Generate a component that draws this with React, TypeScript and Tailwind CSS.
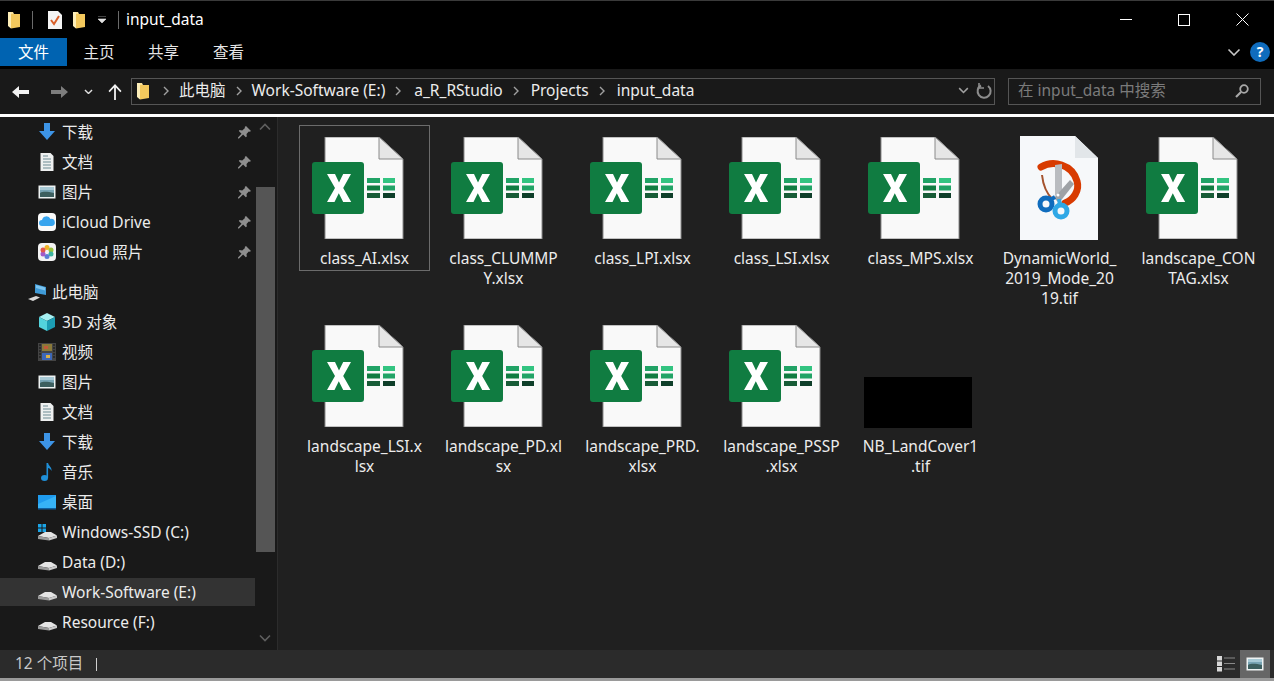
import React from 'react';

const FolderIcon = () => (
  <svg width="13" height="18" viewBox="0 0 13 18" className="shrink-0">
    <path d="M0 1h5l1 2h6v12H0z" fill="#fbe39a" />
    <path d="M3 3h9v13l-9 1.500z" fill="#f4c95d" />
    <path d="M0 1h3v16.500L0 15z" fill="#fdeeb8" />
  </svg>
);

const Sep = () => <div className="mx-[6px] h-[18px] w-px bg-[#6a6a6a]" />;

const Chevron = ({ color = '#a0a0a0' }: { color?: string }) => (
  <svg width="6" height="10" viewBox="0 0 6 10" className="shrink-0">
    <path d="M1 1l4 4-4 4" fill="none" stroke={color} strokeWidth="1.400" />
  </svg>
);

const Down = ({ w = 14, color = '#cfcfcf', sw = 2 }: { w?: number; color?: string; sw?: number }) => (
  <svg width={w} height={w * 0.6} viewBox="0 0 14 8.400" className="shrink-0">
    <path d="M1.500 1.500l5.500 5.500 5.500-5.500" fill="none" stroke={color} strokeWidth={sw} />
  </svg>
);

const ArrowDownBlue = () => (
  <svg width="18" height="18" viewBox="0 0 18 18">
    <path d="M6 0h6v8h5l-8 9-8-9h5z" fill="#3d94e6" />
  </svg>
);

const DocIcon = () => (
  <svg width="18" height="18" viewBox="0 0 18 18">
    <path d="M2.500 0h10l3 3v15h-13z" fill="#eef0f0" />
    <path d="M5 3h5M5 6h8M5 9h8M5 12h8M5 15h8" stroke="#6d8b93" strokeWidth="1" />
  </svg>
);

const PicIcon = () => (
  <svg width="18" height="18" viewBox="0 0 18 18">
    <rect x="0.500" y="2.500" width="17" height="13" fill="#eef2f2" />
    <rect x="2" y="4" width="14" height="10" fill="#79a5b5" />
    <path d="M2 10c4-2 8-1 14 0v4H2z" fill="#3d5f5f" />
    <path d="M2 4h14v3H2z" fill="#a7c9d5" />
  </svg>
);

const CloudIcon = () => (
  <svg width="18" height="18" viewBox="0 0 18 18">
    <rect width="18" height="18" rx="4" fill="#fafafa" />
    <path d="M4 13a3 3 0 0 1 0-6 4.500 4.500 0 0 1 8.500-1A3.500 3.500 0 0 1 14 13z" fill="#37a4ee" />
  </svg>
);

const PhotosIcon = () => (
  <svg width="18" height="18" viewBox="0 0 18 18">
    <rect width="18" height="18" rx="4" fill="#f4f4f4" />
    <circle cx="9" cy="4.500" r="2.500" fill="#f0b429" />
    <circle cx="13" cy="7" r="2.500" fill="#9ac33c" />
    <circle cx="13" cy="11" r="2.500" fill="#3db4a0" />
    <circle cx="9" cy="13.500" r="2.500" fill="#5b7fd6" />
    <circle cx="5" cy="11" r="2.500" fill="#a35bc9" />
    <circle cx="5" cy="7" r="2.500" fill="#e2574c" />
  </svg>
);

const PcIcon = () => (
  <svg width="20" height="18" viewBox="0 0 20 18">
    <path d="M7 1l11 3v8L7 10z" fill="#3f9ad6" />
    <path d="M8 2l9 2.500v3L8 5z" fill="#7cc4ee" />
    <path d="M0 16l8-3 4 1.500L5 18z" fill="#d8d8d8" />
  </svg>
);

const CubeIcon = () => (
  <svg width="18" height="18" viewBox="0 0 18 18">
    <path d="M9 0l8 4-8 4-8-4z" fill="#a6f0f2" />
    <path d="M1 4l8 4v10l-8-4z" fill="#53d3dc" />
    <path d="M17 4L9 8v10l8-4z" fill="#1c9db3" />
  </svg>
);

const VideoIcon = () => (
  <svg width="18" height="18" viewBox="0 0 18 18">
    <rect width="18" height="18" fill="#444" />
    <rect x="4" y="1" width="10" height="7" fill="#8a7a3a" />
    <rect x="4" y="10" width="10" height="7" fill="#3d67b8" />
    <path d="M6 3h4v3H6z" fill="#c25a3a" />
    <path d="M8 12h4v3H8z" fill="#d9b24a" />
    <path d="M1 2h2M1 5h2M1 8h2M1 11h2M1 14h2M15 2h2M15 5h2M15 8h2M15 11h2M15 14h2" stroke="#111" strokeWidth="1.200" />
  </svg>
);

const MusicIcon = () => (
  <svg width="18" height="18" viewBox="0 0 18 18">
    <ellipse cx="6.500" cy="15" rx="3.500" ry="3" fill="#1f8fd8" />
    <path d="M8.500 0h1.600c.4 3 4 4 3.400 8-.8-2-2.500-2.800-3.400-3V15H8.500z" fill="#1f8fd8" />
  </svg>
);

const DesktopIcon = () => (
  <svg width="18" height="18" viewBox="0 0 18 18">
    <rect y="2" width="18" height="13" fill="#1f9bee" />
    <path d="M0 11L18 3v12H0z" fill="#37b3f6" />
    <path d="M0 15h18v1.500H0z" fill="#0f5f9e" />
  </svg>
);

const DriveIcon = ({ win }: { win?: boolean }) => (
  <svg width="19" height="18" viewBox="0 0 19 18">
    {win && <path d="M0 1h3.500v3.500H0zM4.500 1H8v3.500H4.500zM0 5.500h3.500V9H0zM4.500 5.500H8V9H4.500z" fill="#1aa5e8" />}
    <path d="M0 13l7-4h6l6 3.500-8 2.500z" fill="#e4e4e4" />
    <path d="M0 13l11 2v2.500L0 16z" fill="#9a9a9a" />
    <path d="M11 15l8-2.500v2.500l-8 2.500z" fill="#c9c9c9" />
  </svg>
);

const PinIcon = () => (
  <svg width="13" height="13" viewBox="0 0 13 13">
    <path d="M8 0l5 5-1.200.8-1-.4L8.500 8l.3 2.500-1 .8-2.700-2.800L1 12.500 0 12.500 0 11.500l3.500-3.700L.8 5 1.600 4 4.200 4.500 7 2l-.3-1z" fill="#8f8f8f" />
  </svg>
);

type NavRow = { id: string; label: string; icon: React.ReactNode; pin?: boolean; active?: boolean };

const navRows: NavRow[] = [
  { id: 'q-down', label: '下载', icon: <ArrowDownBlue />, pin: true },
  { id: 'q-docs', label: '文档', icon: <DocIcon />, pin: true },
  { id: 'q-pics', label: '图片', icon: <PicIcon />, pin: true },
  { id: 'q-cloud', label: 'iCloud Drive', icon: <CloudIcon />, pin: true },
  { id: 'q-photos', label: 'iCloud 照片', icon: <PhotosIcon />, pin: true },
];

const pcRows: NavRow[] = [
  { id: 'pc-3d', label: '3D 对象', icon: <CubeIcon /> },
  { id: 'pc-video', label: '视频', icon: <VideoIcon /> },
  { id: 'pc-pics', label: '图片', icon: <PicIcon /> },
  { id: 'pc-docs', label: '文档', icon: <DocIcon /> },
  { id: 'pc-down', label: '下载', icon: <ArrowDownBlue /> },
  { id: 'pc-music', label: '音乐', icon: <MusicIcon /> },
  { id: 'pc-desk', label: '桌面', icon: <DesktopIcon /> },
  { id: 'pc-c', label: 'Windows-SSD (C:)', icon: <DriveIcon win /> },
  { id: 'pc-d', label: 'Data (D:)', icon: <DriveIcon /> },
  { id: 'pc-e', label: 'Work-Software (E:)', icon: <DriveIcon />, active: true },
  { id: 'pc-f', label: 'Resource (F:)', icon: <DriveIcon /> },
];

const NavItem = ({ row }: { row: NavRow }) => (
  <div className="flex h-[30px] items-center">
    <div className={`flex h-[28px] w-full items-center pl-[38px] pr-[4px] ${row.active ? 'bg-[#333333]' : ''}`}>
      <div className="flex w-[24px] shrink-0 items-center">{row.icon}</div>
      <span className="flex-1 pt-[2px] text-[#ececec]">{row.label}</span>
      {row.pin && <PinIcon />}
    </div>
  </div>
);

const ExcelIcon = () => (
  <svg width="92" height="102" viewBox="0 0 92 102" className="shrink-0">
    <path d="M13 0h54l24 22v80H13z" fill="#f9f9f9" stroke="#8a8a8a" strokeWidth="1" />
    <path d="M67 0v22h24z" fill="#e6e6e6" stroke="#8a8a8a" strokeWidth="1" />
    <rect x="0" y="25" width="52" height="52" rx="3" fill="#107c41" />
    <path d="M15 37h8l4 8.500 4.200-8.500h7.800l-7.800 14 8 14h-8l-4.400-8.800L22.500 65H15l8-14z" fill="#fff" />
    <rect x="55" y="41" width="13" height="5" fill="#21a366" />
    <rect x="71" y="41" width="12" height="5" fill="#33c481" />
    <rect x="55" y="48.500" width="13" height="5" fill="#107c41" />
    <rect x="71" y="48.500" width="12" height="5" fill="#21a366" />
    <rect x="55" y="56" width="13" height="5" fill="#185c37" />
    <rect x="71" y="56" width="12" height="5" fill="#0f3f2a" />
  </svg>
);

const TifIcon = () => (
  <svg width="92" height="104" viewBox="0 0 92 104" className="shrink-0">
    <path d="M13 0h55l23 22v82H13z" fill="#f6f8fa" />
    <path d="M68 0v22h23z" fill="#e2e6e9" />
    <path d="M35 39c1 10 5 19 11 25" fill="none" stroke="#a5532e" strokeWidth="2" />
    <path d="M34 31C46 24 65 28 70 45 73 55 66 64 58 67" fill="none" stroke="#d83b01" strokeWidth="7" strokeLinecap="round" />
    <path d="M48 29l7-1v31l-3 5-4-5z" fill="#b9bcc0" />
    <path d="M63 44l4 4-15 19-5-5z" fill="#9ea2a6" />
    <circle cx="51" cy="59" r="1.500" fill="#fff" />
    <circle cx="39" cy="68" r="6" fill="none" stroke="#0f6cbd" strokeWidth="5" />
    <circle cx="54" cy="75" r="6" fill="none" stroke="#2fa8e6" strokeWidth="5" />
    <path d="M43 64l5-3" stroke="#0f6cbd" strokeWidth="4" />
    <path d="M53 69l-1-6" stroke="#2fa8e6" strokeWidth="4" />
  </svg>
);

type FileItem = { lines: string[]; kind: 'xlsx' | 'tif' | 'black'; selected?: boolean };

const files: FileItem[] = [
  { lines: ['class_AI.xlsx'], kind: 'xlsx', selected: true },
  { lines: ['class_CLUMMP', 'Y.xlsx'], kind: 'xlsx' },
  { lines: ['class_LPI.xlsx'], kind: 'xlsx' },
  { lines: ['class_LSI.xlsx'], kind: 'xlsx' },
  { lines: ['class_MPS.xlsx'], kind: 'xlsx' },
  { lines: ['DynamicWorld_', '2019_Mode_20', '19.tif'], kind: 'tif' },
  { lines: ['landscape_CON', 'TAG.xlsx'], kind: 'xlsx' },
  { lines: ['landscape_LSI.x', 'lsx'], kind: 'xlsx' },
  { lines: ['landscape_PD.xl', 'sx'], kind: 'xlsx' },
  { lines: ['landscape_PRD.', 'xlsx'], kind: 'xlsx' },
  { lines: ['landscape_PSSP', '.xlsx'], kind: 'xlsx' },
  { lines: ['NB_LandCover1', '.tif'], kind: 'black' },
];

const FileTile = ({ file }: { file: FileItem }) => (
  <div className={`flex min-h-[146px] flex-col items-center self-start border pt-[11px] ${file.selected ? 'border-[#6b6b6b]' : 'border-transparent'}`}>
    <div className="flex h-[104px] w-full items-end justify-center">
      {file.kind === 'xlsx' && <div className="mb-[2px] mr-[14px] flex h-[102px]"><ExcelIcon /></div>}
      {file.kind === 'tif' && <div className="mb-[1px] mr-[14px] flex h-[104px]"><TifIcon /></div>}
      {file.kind === 'black' && <div className="mb-[1px] mr-[6px] h-[51px] w-[108px] bg-black" />}
    </div>
    <div className="pt-[7px] text-center leading-[20px] text-[#ececec]">
      {file.lines.map((line) => (
        <div key={line}>{line}</div>
      ))}
    </div>
  </div>
);

export default function App() {
  return (
    <div className="flex h-[681px] w-[1274px] flex-col overflow-hidden bg-[#202020] text-[15.5px] [font-family:'Noto_Sans','Noto_Sans_CJK_SC',sans-serif]">
      {/* title bar */}
      <div className="h-px bg-[#3a3a3a]" />
      <div className="flex h-[37px] items-center bg-black pl-[8px] text-white">
        <FolderIcon />
        <div className="ml-[5px]"><Sep /></div>
        <svg width="16" height="18" viewBox="0 0 16 18" className="ml-[8px]">
          <path d="M1 0h10l4 4v14H1z" fill="#f4f4f4" />
          <path d="M4 9l3 4 5-8" fill="none" stroke="#d9602b" strokeWidth="2" />
        </svg>
        <div className="ml-[10px]"><FolderIcon /></div>
        <svg width="8" height="7" viewBox="0 0 8 7" className="ml-[12px]">
          <path d="M0 0h8M0 3h8l-4 4z" fill="#e0e0e0" stroke="#e0e0e0" strokeWidth="0.600" />
        </svg>
        <div className="ml-[6px]"><Sep /></div>
        <span className="ml-[1px]">input_data</span>
        <div className="flex-1" />
        <div className="h-px w-[12px] bg-white" />
        <div className="ml-[46px] h-[12px] w-[12px] border border-white" />
        <svg width="13" height="13" viewBox="0 0 13 13" className="ml-[46px] mr-[25px]">
          <path d="M.5.5l12 12M12.500.5l-12 12" stroke="#fff" strokeWidth="1" />
        </svg>
      </div>
      {/* ribbon tabs */}
      <div className="flex h-[31px] items-start bg-black text-[#e6e6e6]">
        <div className="flex h-[28px] w-[67px] items-center justify-center bg-[#0063b1] pt-[2px] text-white">文件</div>
        <div className="flex h-[28px] w-[64px] items-center justify-center pt-[2px]">主页</div>
        <div className="flex h-[28px] w-[65px] items-center justify-center pt-[2px]">共享</div>
        <div className="flex h-[28px] w-[65px] items-center justify-center pt-[2px]">查看</div>
        <div className="flex-1" />
        <div className="flex h-[28px] items-center gap-[9px] pr-[4px]">
          <Down w={14} color="#c8c8c8" sw={1.600} />
          <div className="flex h-[20px] w-[20px] items-center justify-center rounded-full bg-[#0f6cbd] text-[14px] font-bold leading-none text-white">?</div>
        </div>
      </div>
      {/* address bar */}
      <div className="flex h-[45px] items-center bg-[#191919] pl-[12px] pr-[13px]">
        <svg width="17" height="14" viewBox="0 0 17 14" className="shrink-0">
          <path d="M0 7l7-6v4h10v4H7v4z" fill="#f2f2f2" />
        </svg>
        <svg width="17" height="14" viewBox="0 0 17 14" className="ml-[22px] shrink-0">
          <path d="M17 7l-7-6v4H0v4h10v4z" fill="#7d7d7d" />
        </svg>
        <div className="ml-[16px]"><Down w={9} color="#e0e0e0" sw={2.200} /></div>
        <svg width="14" height="16" viewBox="0 0 14 16" className="ml-[15px] shrink-0">
          <path d="M7 0l6.500 7-1.200 1.200L7.900 3.500V16H6.100V3.500L1.700 8.200.500 7z" fill="#f2f2f2" />
        </svg>
        <div className="ml-[9px] flex h-[27px] w-[864px] items-center border border-[#555555] pb-[2px] pl-[5px] pr-[2px] text-[#ececec]">
          <FolderIcon />
          <div className="ml-[13px]"><Chevron /></div>
          <span className="ml-[10px]">此电脑</span>
          <div className="ml-[10px]"><Chevron /></div>
          <span className="ml-[10px]">Work-Software (E:)</span>
          <div className="ml-[10px]"><Chevron /></div>
          <span className="ml-[13px]">a_R_RStudio</span>
          <div className="ml-[10px]"><Chevron /></div>
          <span className="ml-[12px]">Projects</span>
          <div className="ml-[10px]"><Chevron /></div>
          <span className="ml-[12px]">input_data</span>
          <div className="flex-1" />
          <Down w={11} color="#a0a0a0" sw={2} />
          <svg width="16" height="16" viewBox="0 0 16 16" className="ml-[7px] shrink-0">
            <path d="M5 2.500A6.500 6.500 0 1 0 12 3" fill="none" stroke="#8d8d8d" strokeWidth="2" />
            <path d="M3 0v5h5" fill="none" stroke="#8d8d8d" strokeWidth="1.600" />
          </svg>
        </div>
        <div className="ml-[13px] flex h-[27px] flex-1 items-center justify-between border border-[#555555] pb-[1px] pl-[9px] pr-[11px] text-[#7b7b7b]">
          <span>在 input_data 中搜索</span>
          <svg width="14" height="14" viewBox="0 0 14 14">
            <circle cx="9" cy="5" r="3.800" fill="none" stroke="#a8a8a8" strokeWidth="1.800" />
            <path d="M6 8l-5 5" stroke="#a8a8a8" strokeWidth="2.200" />
          </svg>
        </div>
      </div>
      <div className="h-[3px] bg-white" />
      {/* main */}
      <div className="flex min-h-0 flex-1">
        <div className="w-[255px] shrink-0 bg-[#191919]">
          {navRows.map((row) => (
            <NavItem key={row.id} row={row} />
          ))}
          <div className="mt-[10px] flex h-[30px] items-center pl-[28px] text-[#ececec]">
            <div className="flex w-[24px] items-center"><PcIcon /></div>
            <span className="pt-[2px]">此电脑</span>
          </div>
          {pcRows.map((row) => (
            <NavItem key={row.id} row={row} />
          ))}
        </div>
        {/* nav scrollbar */}
        <div className="flex w-[22px] shrink-0 flex-col items-center bg-[#191919] pr-[2px] pt-[6px]">
          <svg width="12" height="8" viewBox="0 0 12 8" className="rotate-180">
            <path d="M1 1.500l5 5 5-5" fill="none" stroke="#5f5f5f" strokeWidth="1.600" />
          </svg>
          <div className="mt-[56px] h-[365px] w-[19px] bg-[#555555]" />
          <svg width="12" height="8" viewBox="0 0 12 8" className="mt-[82px]">
            <path d="M1 1.500l5 5 5-5" fill="none" stroke="#5f5f5f" strokeWidth="1.600" />
          </svg>
        </div>
        <div className="w-px shrink-0 bg-[#2c2c2c]" />
        {/* file grid */}
        <div className="flex-1 pl-[21px] pt-[8px]">
          <div className="grid grid-cols-[repeat(7,131px)] gap-x-[8px] gap-y-[4px]">
            {files.map((file) => (
              <FileTile key={file.lines[0]} file={file} />
            ))}
          </div>
        </div>
      </div>
      {/* status bar */}
      <div className="flex h-[28px] items-center bg-[#2b2b2b] pl-[15px] pr-[4px] text-[#c8c8c8]">
        <span>12 个项目</span>
        <div className="ml-[13px] h-[13px] w-px bg-[#d0d0d0]" />
        <div className="flex-1" />
        <svg width="18" height="16" viewBox="0 0 18 16" className="mr-[5px]">
          <rect x="0" y="0" width="5" height="4.500" fill="#d8d8d8" />
          <rect x="0" y="5.500" width="5" height="4.500" fill="#d8d8d8" />
          <rect x="0" y="11" width="5" height="4.500" fill="#d8d8d8" />
          <path d="M7 2h11M7 7.500h11M7 13h11" stroke="#8a8a8a" strokeWidth="1" />
        </svg>
        <div className="flex h-[28px] w-[30px] items-center justify-center bg-[#666666]">
          <PicIcon />
        </div>
      </div>
      <div className="h-[3px] bg-[#9a9a9a]" />
    </div>
  );
}
